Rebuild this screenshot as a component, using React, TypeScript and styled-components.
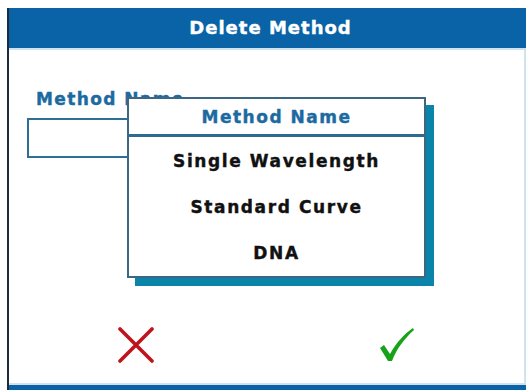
import React from "react";
import styled, { createGlobalStyle } from "styled-components";

const Global = createGlobalStyle`
  html, body { margin: 0; padding: 0; background: #ffffff; }
  body { font-family: "DejaVu Sans", "Liberation Sans", sans-serif; }
`;

const Screen = styled.div`
  width: 526px;
  height: 390px;
  box-sizing: border-box;
  padding: 8px 0 0 7px;
  background: #ffffff;
  overflow: hidden;
`;

const Window = styled.div`
  height: 100%;
  display: flex;
  flex-direction: column;
  border-left: 2px solid #1d2c3b;
`;

const Header = styled.div`
  height: 42px;
  flex: none;
  background: #0963a6;
  color: #ffffff;
  display: flex;
  align-items: center;
  justify-content: center;
  font-weight: bold;
  font-size: 18px;
  letter-spacing: 1px;
  -webkit-text-stroke: 0.4px #ffffff;
  border-bottom: 2px solid #cfe3ef;
  padding: 0 0 2px 6px;
  box-sizing: border-box;
`;

const Body = styled.div`
  position: relative;
  flex: 1;
  display: flex;
  flex-direction: column;
  border-right: 2px solid #cfe3ef;
  border-bottom: 2px solid #cfe3ef;
`;

const Label = styled.div`
  margin: 40px 0 0 27px;
  color: #1b6aa0;
  font-weight: bold;
  font-size: 17px;
  letter-spacing: 1.4px;
  line-height: 18px;
  -webkit-text-stroke: 0.4px #1b6aa0;
`;

const Field = styled.div`
  margin: 10px 0 0 18px;
  width: 280px;
  height: 36px;
  border: 2px solid #2e6f96;
`;

const Popup = styled.div`
  position: absolute;
  left: 118px;
  top: 47px;
  width: 295px;
  height: 177px;
  background: #ffffff;
  border: 2px solid #3d6682;
  box-shadow: 8px 8px 0 #0a84a8;
  display: flex;
  flex-direction: column;
`;

const PopupTitle = styled.div`
  height: 38px;
  border-bottom: 3px solid #2f6a90;
  display: flex;
  align-items: center;
  justify-content: center;
  color: #1b6aa0;
  font-weight: bold;
  font-size: 17px;
  letter-spacing: 1.5px;
  -webkit-text-stroke: 0.4px #1b6aa0;
  box-sizing: border-box;
`;

const Option = styled.div`
  height: 46px;
  display: flex;
  align-items: center;
  justify-content: center;
  color: #111111;
  font-weight: bold;
  font-size: 17px;
  letter-spacing: 1.6px;
  -webkit-text-stroke: 0.4px #111111;
  padding-top: 2px;
  box-sizing: border-box;
`;

const Actions = styled.div`
  margin-top: auto;
  display: flex;
  gap: 225px;
  padding: 0 0 20px 109px;
`;

const IconButton = styled.div`
  width: 36px;
  height: 36px;
  display: flex;
  align-items: center;
  justify-content: center;
`;

const Footer = styled.div`
  height: 5px;
  flex: none;
  background: #0963a6;
`;

export default function App() {
  return (
    <>
      <Global />
      <Screen>
        <Window>
          <Header>Delete Method</Header>
          <Body>
            <Label>Method Name</Label>
            <Field />
            <Popup>
              <PopupTitle>Method Name</PopupTitle>
              <Option>Single Wavelength</Option>
              <Option>Standard Curve</Option>
              <Option>DNA</Option>
            </Popup>
            <Actions>
              <IconButton>
                <svg width="36" height="36" viewBox="0 0 36 36">
                  <path d="M2 2 L34 34 M34 2 L2 34" stroke="#c0141c" strokeWidth="3.6" strokeLinecap="round" />
                </svg>
              </IconButton>
              <IconButton>
                <svg width="36" height="36" viewBox="0 0 36 36">
                  <path d="M1 21 L5 18 L11 27 C17 16 25 7 34 1 L35 3 C26 11 18 21 13 34 L9 34 Z" fill="#17a317" />
                </svg>
              </IconButton>
            </Actions>
          </Body>
          <Footer />
        </Window>
      </Screen>
    </>
  );
}
